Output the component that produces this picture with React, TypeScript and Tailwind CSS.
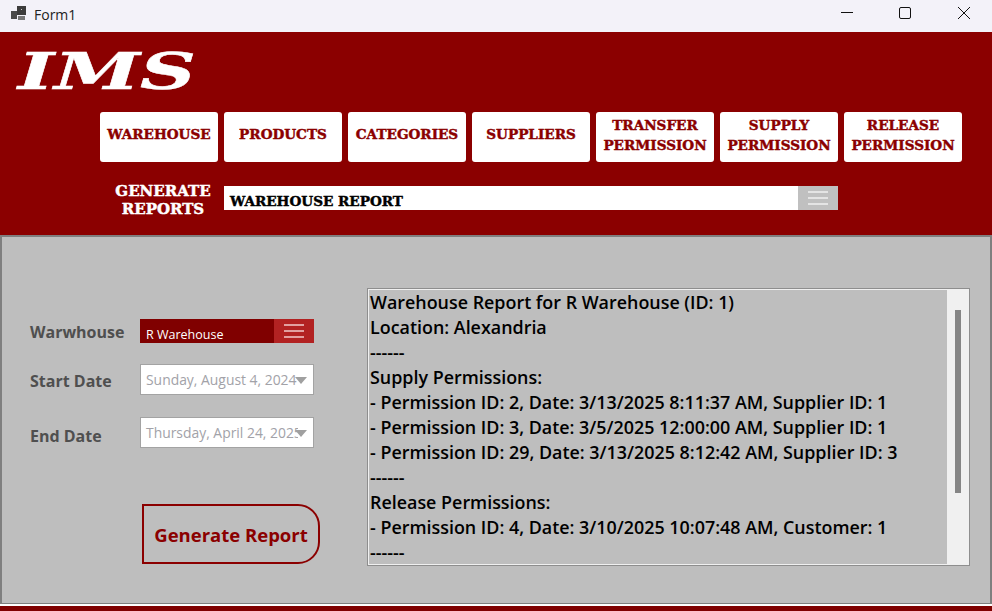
const stencil = "font-['DejaVu_Serif',serif] font-bold [-webkit-text-stroke:0.45px]";
const segoe = "font-['Open_Sans',sans-serif]";

const navButtons = [
  ["WAREHOUSE"],
  ["PRODUCTS"],
  ["CATEGORIES"],
  ["SUPPLIERS"],
  ["TRANSFER", "PERMISSION"],
  ["SUPPLY", "PERMISSION"],
  ["RELEASE", "PERMISSION"],
];

const reportLines = [
  "Warehouse Report for R Warehouse (ID: 1)",
  "Location: Alexandria",
  "------",
  "Supply Permissions:",
  "- Permission ID: 2, Date: 3/13/2025 8:11:37 AM, Supplier ID: 1",
  "- Permission ID: 3, Date: 3/5/2025 12:00:00 AM, Supplier ID: 1",
  "- Permission ID: 29, Date: 3/13/2025 8:12:42 AM, Supplier ID: 3",
  "------",
  "Release Permissions:",
  "- Permission ID: 4, Date: 3/10/2025 10:07:48 AM, Customer: 1",
  "------",
];

function WindowIcon() {
  return (
    <svg width="16" height="15" viewBox="0 0 16 15" className="shrink-0">
      <rect x="0" y="5" width="6" height="8" fill="#4a4a4a" />
      <rect x="6" y="0" width="9" height="9" fill="#3c3c3c" />
      <rect x="7" y="10" width="7" height="4" fill="#777777" />
      <rect x="10" y="3" width="1" height="1" fill="#cccccc" />
    </svg>
  );
}

function TitleBar() {
  return (
    <div className="h-8 bg-[#f3f2f9] flex items-center shrink-0">
      <div className="ml-[11px] mr-[7px] -mt-[5px]">
        <WindowIcon />
      </div>
      <span className={`${segoe} text-[14px] text-[#222222] -mt-[4px]`}>Form1</span>
      <div className="ml-auto flex items-center text-black -mt-[6px]">
        <div className="w-[58px] flex justify-center">
          <svg width="14" height="14" viewBox="0 0 14 14">
            <path d="M1 6.5H13" stroke="#111" strokeWidth="1" />
          </svg>
        </div>
        <div className="w-[58px] flex justify-center">
          <svg width="14" height="14" viewBox="0 0 14 14">
            <rect x="1.5" y="1.5" width="11" height="11" rx="1.5" fill="none" stroke="#111" strokeWidth="1" />
          </svg>
        </div>
        <div className="w-[58px] flex justify-center pl-[1px]">
          <svg width="14" height="14" viewBox="0 0 14 14">
            <path d="M1 1L13 13M13 1L1 13" stroke="#111" strokeWidth="1" />
          </svg>
        </div>
      </div>
    </div>
  );
}

function Bars({ color }: { color: string }) {
  return (
    <svg width="20" height="14" viewBox="0 0 20 14">
      <path d="M0 1H20M0 7H20M0 13H20" stroke={color} strokeWidth="2" />
    </svg>
  );
}

function Header() {
  return (
    <div className="h-[203px] bg-[#8b0000] shrink-0 flex flex-col">
      <div className="h-20 pl-[18px] pt-[10px] overflow-hidden">
        <div className={`${stencil} italic text-white text-[50px] leading-[60px] origin-left scale-x-[1.55] w-fit`}>
          IMS
        </div>
      </div>
      <div className="flex gap-[6px] pl-[100px]">
        {navButtons.map((lines) => (
          <div
            key={lines.join(" ")}
            className={`w-[118px] h-[50px] bg-white rounded-[3px] flex flex-col items-center text-[#8b0000] ${stencil} text-[13.6px] leading-[20px] ${lines.length === 1 ? "pt-[12px]" : "pt-[3px]"}`}
          >
            {lines.map((l) => (
              <span key={l}>{l}</span>
            ))}
          </div>
        ))}
      </div>
      <div className="flex items-start mt-[20px]">
        <div className={`w-[224px] pl-[103px] text-center text-white ${stencil} text-[15px] leading-[18px]`}>
          <div className="w-[120px]">GENERATE</div>
          <div className="w-[120px]">REPORTS</div>
        </div>
        <div className="w-[614px] h-6 bg-white flex mt-[4px]">
          <span className={`${stencil} text-[13.6px] leading-[31px] text-black flex-1 pl-[6px]`}>WAREHOUSE REPORT</span>
          <div className="w-10 bg-[#c0c0c0] flex items-center justify-center">
            <Bars color="#e4e4e4" />
          </div>
        </div>
      </div>
    </div>
  );
}

function DateField({ value }: { value: string }) {
  return (
    <div className="w-[174px] h-[31px] bg-white border border-[#a3a3a3] relative flex items-center">
      <div className="w-[157px] overflow-hidden">
        <span className={`${segoe} text-[13.9px] leading-[27px] text-[#a2a2a8] pl-[5px] whitespace-nowrap block`}>{value}</span>
      </div>
      <svg width="12" height="7" viewBox="0 0 12 7" className="absolute right-[6px] top-[12px]">
        <path d="M0 0H12L6 7Z" fill="#a0a0a0" />
      </svg>
    </div>
  );
}

function Sidebar() {
  const label = `${segoe} font-bold text-[16px] w-[110px] text-[#4f4f4f]`;
  return (
    <div className="w-[365px] shrink-0 pl-[28px] pt-[82px]">
      <div className="flex items-center h-6">
        <span className={`${label} mt-[2px]`}>Warwhouse</span>
        <div className="w-[174px] h-6 bg-[#800000] flex">
          <span className={`${segoe} text-[12.5px] leading-[31px] text-white flex-1 pl-[6px]`}>R Warehouse</span>
          <div className="w-10 bg-[#b22222] flex items-center justify-center">
            <Bars color="#e2a0a0" />
          </div>
        </div>
      </div>
      <div className="flex items-center mt-[21px]">
        <span className={`${label} mt-[2px]`}>Start Date</span>
        <DateField value="Sunday, August 4, 2024" />
      </div>
      <div className="flex items-center mt-[22px]">
        <span className={`${label} mt-[6px]`}>End Date</span>
        <DateField value="Thursday, April 24, 2025" />
      </div>
      <button className={`ml-[112px] mt-[56px] w-[178px] h-[60px] border-2 border-[#8b0000] rounded-r-[22px] text-[#8b0000] ${segoe} font-bold text-[18.5px] leading-[60px] pt-[2px] flex items-center justify-center`}>
        Generate Report
      </button>
    </div>
  );
}

function ReportBox() {
  return (
    <div className="w-[603px] h-[278px] mt-[51px] border border-[#8e8e8e] p-px bg-[#f0f0f0] flex">
      <div className="flex-1 bg-[#bebebe] overflow-hidden pl-[1px]">
        {reportLines.map((line, i) => (
          <div key={i} className={`${segoe} font-semibold text-[17.9px] leading-[25px] text-black whitespace-nowrap`}>
            {line}
          </div>
        ))}
      </div>
      <div className="w-[21px] bg-[#f0f0f0] pt-[20px] flex justify-center">
        <div className="w-[6px] h-[183px] bg-[#858585]" />
      </div>
    </div>
  );
}

export default function App() {
  return (
    <div className="w-[992px] h-[611px] flex flex-col overflow-hidden bg-[#bebebe]">
      <TitleBar />
      <Header />
      <div className="h-[369px] shrink-0 border-2 border-b border-[#7f7f7f] bg-[#bebebe] flex">
        <Sidebar />
        <ReportBox />
      </div>
      <div className="h-[2px] bg-white shrink-0" />
      <div className="flex-1 bg-[#800000]" />
    </div>
  );
}
